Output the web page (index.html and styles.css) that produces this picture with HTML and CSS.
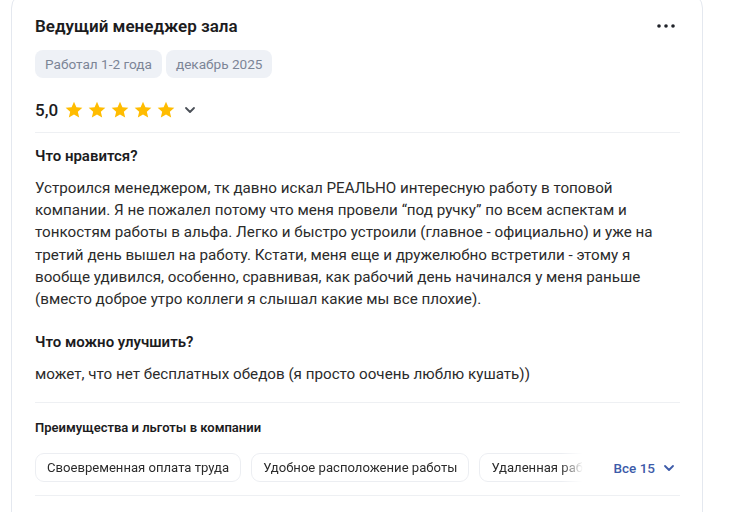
FILE: index.html
```html
<!DOCTYPE html>
<html lang="ru">
<head>
<meta charset="utf-8">
<link rel="stylesheet" href="styles.css">
</head>
<body>
<article class="card">
  <header class="head">
    <h2 class="title">Ведущий менеджер зала</h2>
    <button class="more" aria-label="Ещё">
      <svg width="18" height="4" viewBox="0 0 18 4"><circle cx="2" cy="2" r="1.8"/><circle cx="9" cy="2" r="1.8"/><circle cx="16" cy="2" r="1.8"/></svg>
    </button>
  </header>
  <div class="tags">
    <span class="tag">Работал 1-2 года</span>
    <span class="tag">декабрь 2025</span>
  </div>
  <div class="rating">
    <span class="score">5,0</span>
    <span class="stars">
      <svg viewBox="0 0 24 24"><path d="M12 2.2l2.9 6.6 7.1.6-5.4 4.7 1.6 7-6.2-3.8-6.2 3.8 1.6-7L2 9.4l7.1-.6z"/></svg>
      <svg viewBox="0 0 24 24"><path d="M12 2.2l2.9 6.6 7.1.6-5.4 4.7 1.6 7-6.2-3.8-6.2 3.8 1.6-7L2 9.4l7.1-.6z"/></svg>
      <svg viewBox="0 0 24 24"><path d="M12 2.2l2.9 6.6 7.1.6-5.4 4.7 1.6 7-6.2-3.8-6.2 3.8 1.6-7L2 9.4l7.1-.6z"/></svg>
      <svg viewBox="0 0 24 24"><path d="M12 2.2l2.9 6.6 7.1.6-5.4 4.7 1.6 7-6.2-3.8-6.2 3.8 1.6-7L2 9.4l7.1-.6z"/></svg>
      <svg viewBox="0 0 24 24"><path d="M12 2.2l2.9 6.6 7.1.6-5.4 4.7 1.6 7-6.2-3.8-6.2 3.8 1.6-7L2 9.4l7.1-.6z"/></svg>
    </span>
    <svg class="chev" width="12" height="8" viewBox="0 0 12 8"><path d="M2 2l4 4 4-4" fill="none" stroke-width="1.8" stroke-linecap="round" stroke-linejoin="round"/></svg>
  </div>
  <hr class="sep">
  <section class="block">
    <h3 class="q">Что нравится?</h3>
    <p class="text">Устроился менеджером, тк давно искал РЕАЛЬНО интересную работу в топовой компании. Я не пожалел потому что меня провели “под ручку” по всем аспектам и тонкостям работы в альфа. Легко и быстро устроили (главное - официально) и уже на третий день вышел на работу. Кстати, меня еще и дружелюбно встретили - этому я вообще удивился, особенно, сравнивая, как рабочий день начинался у меня раньше (вместо доброе утро коллеги я слышал какие мы все плохие).</p>
  </section>
  <section class="block block-2">
    <h3 class="q">Что можно улучшить?</h3>
    <p class="text">может, что нет бесплатных обедов (я просто оочень люблю кушать))</p>
  </section>
  <hr class="sep sep-2">
  <section class="perks">
    <h4 class="perks-title">Преимущества и льготы в компании</h4>
    <div class="perks-row">
      <div class="chips">
        <span class="chip">Своевременная оплата труда</span>
        <span class="chip">Удобное расположение работы</span>
        <span class="chip">Удаленная работа</span>
      </div>
      <button class="all">Все 15
        <svg width="12" height="8" viewBox="0 0 12 8"><path d="M2 2l4 4 4-4" fill="none" stroke-width="1.8" stroke-linecap="round" stroke-linejoin="round"/></svg>
      </button>
    </div>
  </section>
  <hr class="sep sep-3">
</article>
</body>
</html>
```

FILE: styles.css
```css
html, body {
  margin: 0;
  padding: 0;
  background: #ffffff;
}
body {
  font-family: Roboto, "Liberation Sans", Arial, sans-serif;
  color: #2b2b2b;
  overflow: hidden;
  height: 512px;
}
.card {
  margin: -8px 0 0 11px;
  width: 645px;
  padding: 21px 22px 40px 23px;
  border: 1px solid #e4e8ef;
  border-radius: 16px;
  background: #fff;
  min-height: 560px;
}
.head {
  display: flex;
  align-items: center;
  justify-content: space-between;
  height: 24px;
}
.title {
  margin: 0;
  font-size: 17px;
  line-height: 24px;
  font-weight: 600;
  color: #1c1c1e;
}
.more {
  border: 0;
  background: none;
  padding: 0;
  width: 24px;
  height: 24px;
  display: flex;
  align-items: center;
  justify-content: center;
  fill: #1f2229;
  margin-right: 2px;
}
.tags {
  display: flex;
  gap: 4px;
  margin-top: 12px;
}
.tag {
  height: 28px;
  display: inline-flex;
  align-items: center;
  padding: 0 10px;
  border-radius: 8px;
  background: #eef1f6;
  color: #7c8596;
  font-size: 13.6px;
}
.rating {
  display: flex;
  align-items: center;
  height: 24px;
  margin-top: 20px;
}
.score {
  font-size: 17px;
  font-weight: 500;
  color: #1c1c1e;
  margin-right: 6px;
}
.stars {
  display: flex;
  gap: 3px;
}
.stars svg {
  width: 20px;
  height: 20px;
  fill: #ffbc00;
}
.chev {
  margin-left: 8px;
  stroke: #4a4f57;
}
.sep {
  border: 0;
  height: 1px;
  background: #eef0f3;
  margin: 10px 0 0;
}
.block {
  margin-top: 12px;
}
.block-2 {
  margin-top: 21px;
}
.q {
  margin: 0;
  font-size: 15px;
  line-height: 22px;
  font-weight: 600;
  color: #1c1c1e;
}
.text {
  margin: 10px 0 0;
  font-size: 15.2px;
  line-height: 22.2px;
  color: #2b2b2b;
}
.sep-2 {
  margin-top: 17px;
}
.perks {
  margin-top: 15px;
}
.perks-title {
  margin: 0;
  font-size: 13px;
  line-height: 20px;
  font-weight: 600;
  color: #1c1c1e;
}
.perks-row {
  display: flex;
  align-items: center;
  margin-top: 15px;
}
.chips {
  flex: 1;
  display: flex;
  gap: 10px;
  overflow: hidden;
  white-space: nowrap;
  -webkit-mask-image: linear-gradient(to right, #000 calc(100% - 36px), transparent calc(100% - 14px));
  mask-image: linear-gradient(to right, #000 calc(100% - 36px), transparent calc(100% - 14px));
}
.chip {
  flex: none;
  height: 27px;
  display: inline-flex;
  align-items: center;
  padding: 0 11px;
  border: 1px solid #eceef2;
  border-radius: 9px;
  font-size: 13.1px;
  color: #2b2b2b;
}
.all {
  flex: none;
  border: 0;
  background: none;
  margin-left: 16px;
  padding: 0 5px 0 0;
  display: flex;
  align-items: center;
  gap: 8px;
  font-family: inherit;
  font-size: 13.5px;
  font-weight: 500;
  color: #3d5ba9;
}
.all svg {
  stroke: #3d5ba9;
}
.sep-3 {
  margin-top: 13px;
}
```
